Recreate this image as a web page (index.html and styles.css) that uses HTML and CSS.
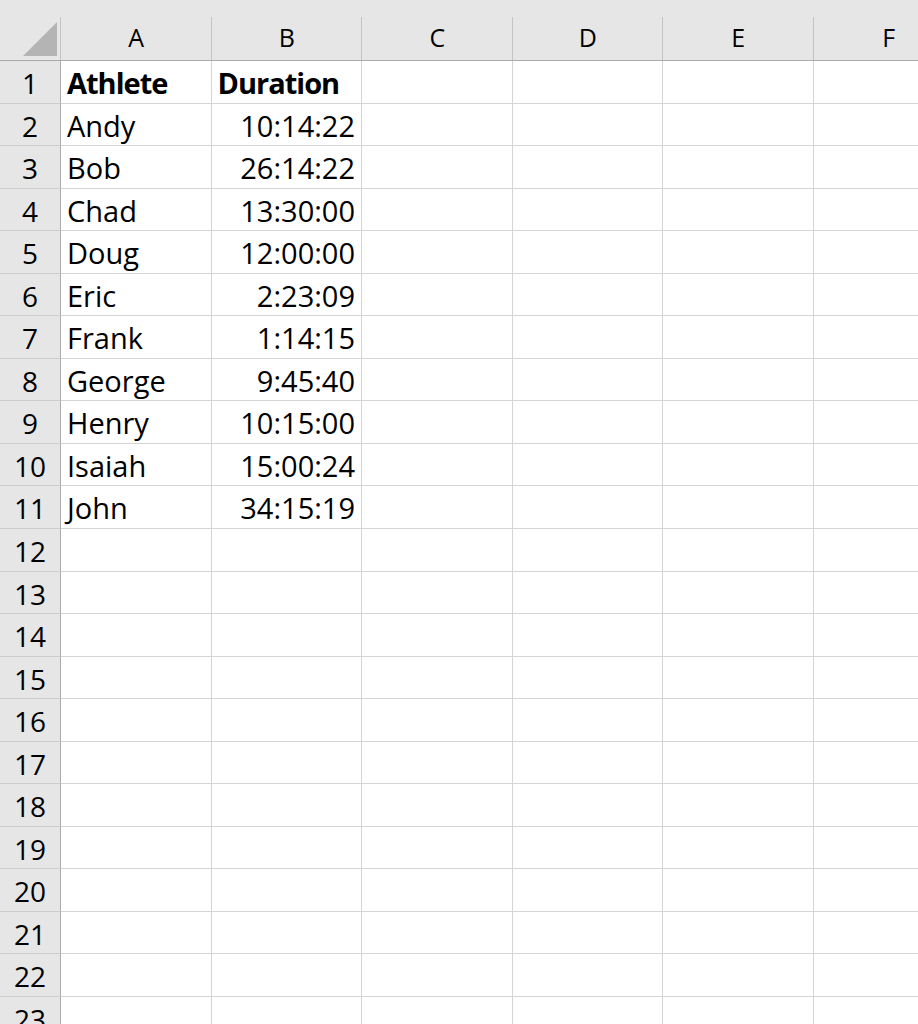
FILE: index.html
```html
<!DOCTYPE html>
<html lang="en">
  <head>
    <meta charset="UTF-8" />
    <meta name="viewport" content="width=device-width, initial-scale=1.0" />
    <title>Athletes</title>
    <link rel="stylesheet" href="styles.css">
  </head>
  <body>
    <div class="sheet">
      <div class="corner">
        <svg width="61" height="61" viewBox="0 0 61 61">
          <polygon points="23,56 57,22 57,56" fill="#b4b4b4" />
        </svg>
      </div>
      <div class="col-head">A</div>
      <div class="col-head">B</div>
      <div class="col-head">C</div>
      <div class="col-head">D</div>
      <div class="col-head">E</div>
      <div class="col-head">F</div>
    </div>

    <script>
      const sheetEl = document.querySelector(".sheet");
      // 데이터
      const rows = [
        ["Athlete", "Duration"],
        ["Andy", "10:14:22"],
        ["Bob", "26:14:22"],
        ["Chad", "13:30:00"],
        ["Doug", "12:00:00"],
        ["Eric", "2:23:09"],
        ["Frank", "1:14:15"],
        ["George", "9:45:40"],
        ["Henry", "10:15:00"],
        ["Isaiah", "15:00:24"],
        ["John", "34:15:19"],
      ];

      for (let i = 0; i < 23; i++) {
        const numEl = document.createElement("div");
        numEl.classList.add("row-head");
        numEl.textContent = i + 1;
        sheetEl.appendChild(numEl);

        const data = rows[i] || [];
        for (let c = 0; c < 6; c++) {
          const cellEl = document.createElement("div");
          cellEl.classList.add("cell");
          if (i === 0) cellEl.classList.add("bold");
          if (c === 1 && i > 0) cellEl.classList.add("num");
          cellEl.textContent = data[c] || "";
          sheetEl.appendChild(cellEl);
        }
      }
    </script>
  </body>
</html>
```

FILE: styles.css
```css
body {
  margin: 0;
  overflow: hidden;
  background: #fff;
  font-family: "Open Sans", "Noto Sans", sans-serif;
  color: #000;
}
.sheet {
  display: grid;
  grid-template-columns: 61px repeat(6, 150.5px);
  grid-template-rows: 61px repeat(23, 42.55px);
  width: 918px;
  height: 1024px;
  overflow: hidden;
}
.corner,
.col-head {
  box-sizing: border-box;
  border-bottom: 1px solid #ababab;
  background: linear-gradient(#c4c4c4, #c4c4c4) right bottom / 1px 43px
      no-repeat,
    #e6e6e6;
}
.corner svg {
  display: block;
}
.col-head {
  text-align: center;
  font-size: 25px;
  line-height: 26px;
  padding-top: 24px;
}
.row-head {
  box-sizing: border-box;
  background: #e6e6e6;
  border-right: 1px solid #ababab;
  border-bottom: 1px solid #cdcdcd;
  text-align: center;
  font-size: 28px;
  line-height: 42px;
  padding-top: 1px;
}
.cell {
  box-sizing: border-box;
  border-right: 1px solid #d4d4d4;
  border-bottom: 1px solid #d4d4d4;
  font-size: 29px;
  line-height: 42px;
  padding: 1px 6px 0;
  white-space: nowrap;
  overflow: hidden;
}
.cell.bold {
  font-weight: bold;
  letter-spacing: -1px;
}
.cell.num {
  text-align: right;
}
```
